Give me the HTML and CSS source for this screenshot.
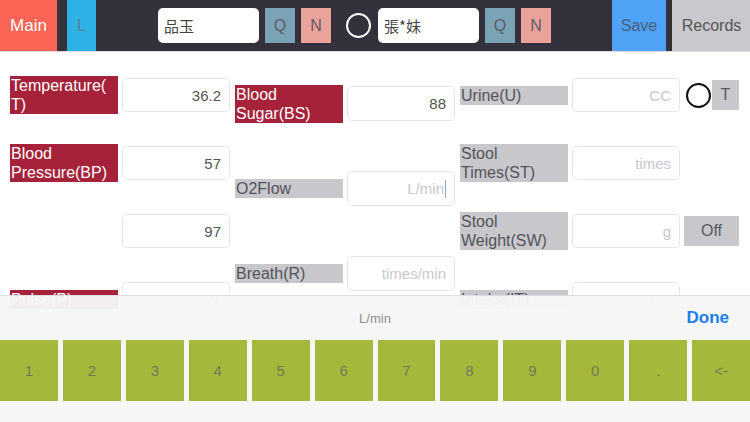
FILE: index.html
```html
<!DOCTYPE html>
<html lang="en">
<head>
<meta charset="utf-8">
<title>Vitals</title>
<link rel="stylesheet" href="styles.css">
</head>
<body>
<div class="screen">
  <header class="topbar">
    <div class="btn btn-main">Main</div>
    <div class="btn btn-l">L</div>
    <div class="name-input name-first">品玉</div>
    <div class="btn btn-sq btn-q">Q</div>
    <div class="btn btn-sq btn-n">N</div>
    <div class="ring ring-white"></div>
    <div class="name-input">張*妹</div>
    <div class="btn btn-sq btn-q">Q</div>
    <div class="btn btn-sq btn-n">N</div>
    <div class="btn btn-save">Save</div>
    <div class="btn btn-records">Records</div>
  </header>

  <main class="form">
    <div class="col col-a">
      <div class="row"><div class="label red">Temperature(<br>T)</div><div class="field">36.2</div></div>
      <div class="row"><div class="label red">Blood Pressure(BP)</div><div class="field">57</div></div>
      <div class="row"><div class="label empty"></div><div class="field">97</div></div>
      <div class="row"><div class="label red">Pulse(P)</div><div class="field">77</div></div>
    </div>
    <div class="col col-b">
      <div class="row"><div class="label red">Blood Sugar(BS)</div><div class="field tall">88</div></div>
      <div class="row"><div class="label grey">O2Flow</div><div class="field tall ph">L/min<span class="caret"></span></div></div>
      <div class="row"><div class="label grey">Breath(R)</div><div class="field tall ph">times/min</div></div>
    </div>
    <div class="col col-a">
      <div class="row"><div class="label grey">Urine(U)</div><div class="field ph">CC</div><div class="ring ring-dark"></div><div class="small-btn t-btn">T</div></div>
      <div class="row"><div class="label grey">Stool Times(ST)</div><div class="field ph">times</div></div>
      <div class="row"><div class="label grey">Stool Weight(SW)</div><div class="field ph">g</div><div class="small-btn off-btn">Off</div></div>
      <div class="row"><div class="label grey">Intake(IT)</div><div class="field ph">CC</div></div>
    </div>
  </main>

  <div class="keyboard">
    <div class="kb-bar">
      <span class="kb-unit">L/min</span>
      <span class="kb-done">Done</span>
    </div>
    <div class="keys">
      <div class="key">1</div><div class="key">2</div><div class="key">3</div><div class="key">4</div>
      <div class="key">5</div><div class="key">6</div><div class="key">7</div><div class="key">8</div>
      <div class="key">9</div><div class="key">0</div><div class="key">.</div><div class="key">&lt;-</div>
    </div>
  </div>
</div>
</body>
</html>
```

FILE: styles.css
```css
* { box-sizing: border-box; }
html, body { margin: 0; padding: 0; }
body {
  font-family: "Liberation Sans", Arial, sans-serif;
  background: #ffffff;
  width: 750px;
  height: 422px;
  overflow: hidden;
}
.screen {
  position: relative;
  width: 750px;
  height: 422px;
  overflow: hidden;
  background: #ffffff;
}

/* top bar */
.topbar {
  height: 52px;
  background: #34313d;
  border-bottom: 1px solid #dcdce0;
  display: flex;
  align-items: center;
}
.btn {
  display: flex;
  align-items: center;
  justify-content: center;
  font-size: 16px;
  flex: none;
}
.btn-main {
  width: 57px;
  height: 51px;
  align-self: flex-start;
  background: #fc6455;
  color: #ffffff;
  font-size: 17px;
}
.btn-l {
  width: 29px;
  height: 51px;
  align-self: flex-start;
  margin-left: 10px;
  background: #2eb2e5;
  color: #5f7f93;
}
.name-input {
  width: 101px;
  height: 35px;
  margin-left: 7px;
  background: #ffffff;
  border-radius: 5px;
  color: #444444;
  font-family: "Noto Sans CJK TC", "Noto Sans CJK SC", sans-serif;
  font-size: 15px;
  display: flex;
  align-items: center;
  padding-left: 6px;
  flex: none;
}
.name-first { margin-left: 62px; }
.btn-sq {
  width: 30px;
  height: 35px;
  margin-left: 6px;
  color: #5d5d66;
}
.btn-q { background: #7ba3b6; }
.btn-n { background: #eaa29b; }
.ring {
  border-radius: 50%;
  flex: none;
}
.ring-white {
  width: 25px;
  height: 25px;
  border: 2px solid #ffffff;
  margin-left: 15px;
}
.btn-save {
  width: 54px;
  height: 51px;
  align-self: flex-start;
  margin-left: 61px;
  background: #4ea3f7;
  color: #4a5d7c;
}
.btn-records {
  width: 79px;
  height: 51px;
  align-self: flex-start;
  margin-left: 6px;
  background: #c9c8cd;
  color: #555555;
}

/* form */
.form {
  display: flex;
  align-items: flex-start;
  padding-left: 10px;
}
.col {
  display: flex;
  flex-direction: column;
  width: 220px;
  flex: none;
  margin-right: 5px;
}
.col-a {
  padding-top: 26px;
  gap: 34px;
}
.col-b {
  padding-top: 34px;
  gap: 50px;
}
.row {
  display: flex;
  align-items: center;
  height: 34px;
  gap: 4px;
}
.col-b .row { height: 35px; }
.label {
  width: 108px;
  flex: none;
  font-size: 16px;
  line-height: 19px;
  padding-left: 1px;
}
.red { background: #a5223a; color: #ffffff; }
.grey { background: #c8c7cc; color: #545458; }
.empty { background: transparent; height: 19px; }
.field {
  width: 108px;
  height: 34px;
  flex: none;
  border: 1px solid #e6e6e9;
  border-radius: 5px;
  background: #ffffff;
  display: flex;
  align-items: center;
  justify-content: flex-end;
  padding-right: 8px;
  font-size: 15px;
  color: #555555;
}
.field.tall { height: 35px; }
.field.ph { color: #c7c7cd; }
.caret {
  width: 1px;
  height: 18px;
  background: #8aa8d0;
  margin-left: 1px;
}
.ring-dark {
  width: 25px;
  height: 25px;
  border: 2px solid #111111;
  margin-left: 2px;
}
.small-btn {
  background: #c8c7cc;
  color: #5a5a5e;
  height: 30px;
  flex: none;
  display: flex;
  align-items: center;
  justify-content: center;
  font-size: 16px;
}
.t-btn { width: 27px; margin-left: -3px; }
.off-btn { width: 55px; margin-left: 0; }

/* keyboard overlay */
.keyboard {
  position: absolute;
  left: 0;
  right: 0;
  bottom: 0;
  height: 127px;
  background: rgba(246, 246, 247, 0.97);
  border-top: 1px solid #dedee2;
}
.kb-bar {
  position: relative;
  height: 44px;
  display: flex;
  align-items: center;
  justify-content: center;
}
.kb-unit {
  font-size: 13px;
  color: #8e8e93;
}
.kb-done {
  position: absolute;
  right: 21px;
  top: 12px;
  font-size: 17px;
  font-weight: bold;
  color: #1a7fe8;
}
.keys {
  display: flex;
  gap: 5px;
  height: 61px;
}
.key {
  flex: 1;
  background: #a6b83b;
  color: #707a58;
  font-size: 15px;
  display: flex;
  align-items: center;
  justify-content: center;
}
```
